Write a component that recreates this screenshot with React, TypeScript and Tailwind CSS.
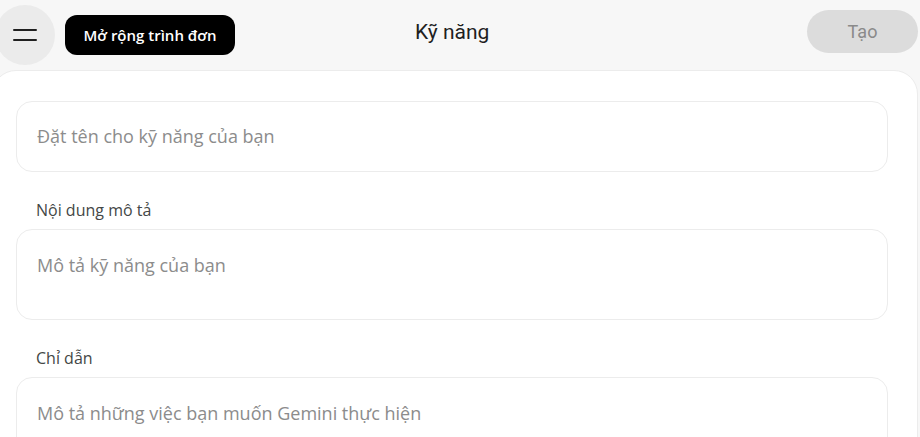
import React from 'react';

const Field = ({ placeholder, tall }: { placeholder: string; tall?: boolean }) => (
  <div
    className={`w-full rounded-2xl border border-[#ececec] bg-white px-5 text-[18px] text-[#8c8c8c] ${
      tall ? 'h-[91px] pt-[21px] leading-7' : 'flex h-[71px] items-center'
    }`}
  >
    {placeholder}
  </div>
);

const Label = ({ children }: { children: React.ReactNode }) => (
  <div className="px-5 pb-[8px] pt-[28px] text-[16px] leading-[21px] text-[#444746]">{children}</div>
);

export default function App() {
  return (
    <div
      className="h-[437px] w-[920px] overflow-hidden bg-[#f7f7f7]"
      style={{ fontFamily: '"Open Sans", "Noto Sans", sans-serif' }}
    >
      {/* Thanh trên cùng */}
      <div className="flex h-[70px] items-start">
        <button className="ml-[-5px] mt-[5px] flex h-[60px] w-[60px] flex-col items-center justify-center gap-[8px] rounded-full bg-[#ebebeb]">
          <span className="block h-[2px] w-[24px] rounded bg-[#1f1f1f]" />
          <span className="block h-[2px] w-[24px] rounded bg-[#1f1f1f]" />
        </button>
        <button className="ml-[10px] mt-[15px] flex h-[40px] w-[170px] items-center justify-center rounded-xl bg-black text-[15px] font-semibold text-white">
          Mở rộng trình đơn
        </button>
        <div
          className="ml-[180px] mt-[18px] text-[21px] leading-7 text-[#1f1f1f]"
          style={{ fontFamily: 'Roboto, "Noto Sans", sans-serif' }}
        >
          Kỹ năng
        </div>
        <div className="flex-1" />
        <button
          className="mr-[2px] mt-[10px] flex h-[43px] w-[111px] items-center justify-center rounded-full bg-[#dcdcdc] text-[18px] text-[#8a8a8a]"
          style={{ fontFamily: 'Roboto, "Noto Sans", sans-serif' }}
        >
          Tạo
        </button>
      </div>

      {/* Thẻ nội dung */}
      <div className="ml-[-8px] mr-[2px] h-[400px] rounded-t-3xl border border-[#ececec] bg-white pl-[23px] pr-[29px] pt-[30px]">
        <Field placeholder="Đặt tên cho kỹ năng của bạn" />
        <Label>Nội dung mô tả</Label>
        <Field placeholder="Mô tả kỹ năng của bạn" tall />
        <Label>Chỉ dẫn</Label>
        <Field placeholder="Mô tả những việc bạn muốn Gemini thực hiện" tall />
      </div>
    </div>
  );
}
